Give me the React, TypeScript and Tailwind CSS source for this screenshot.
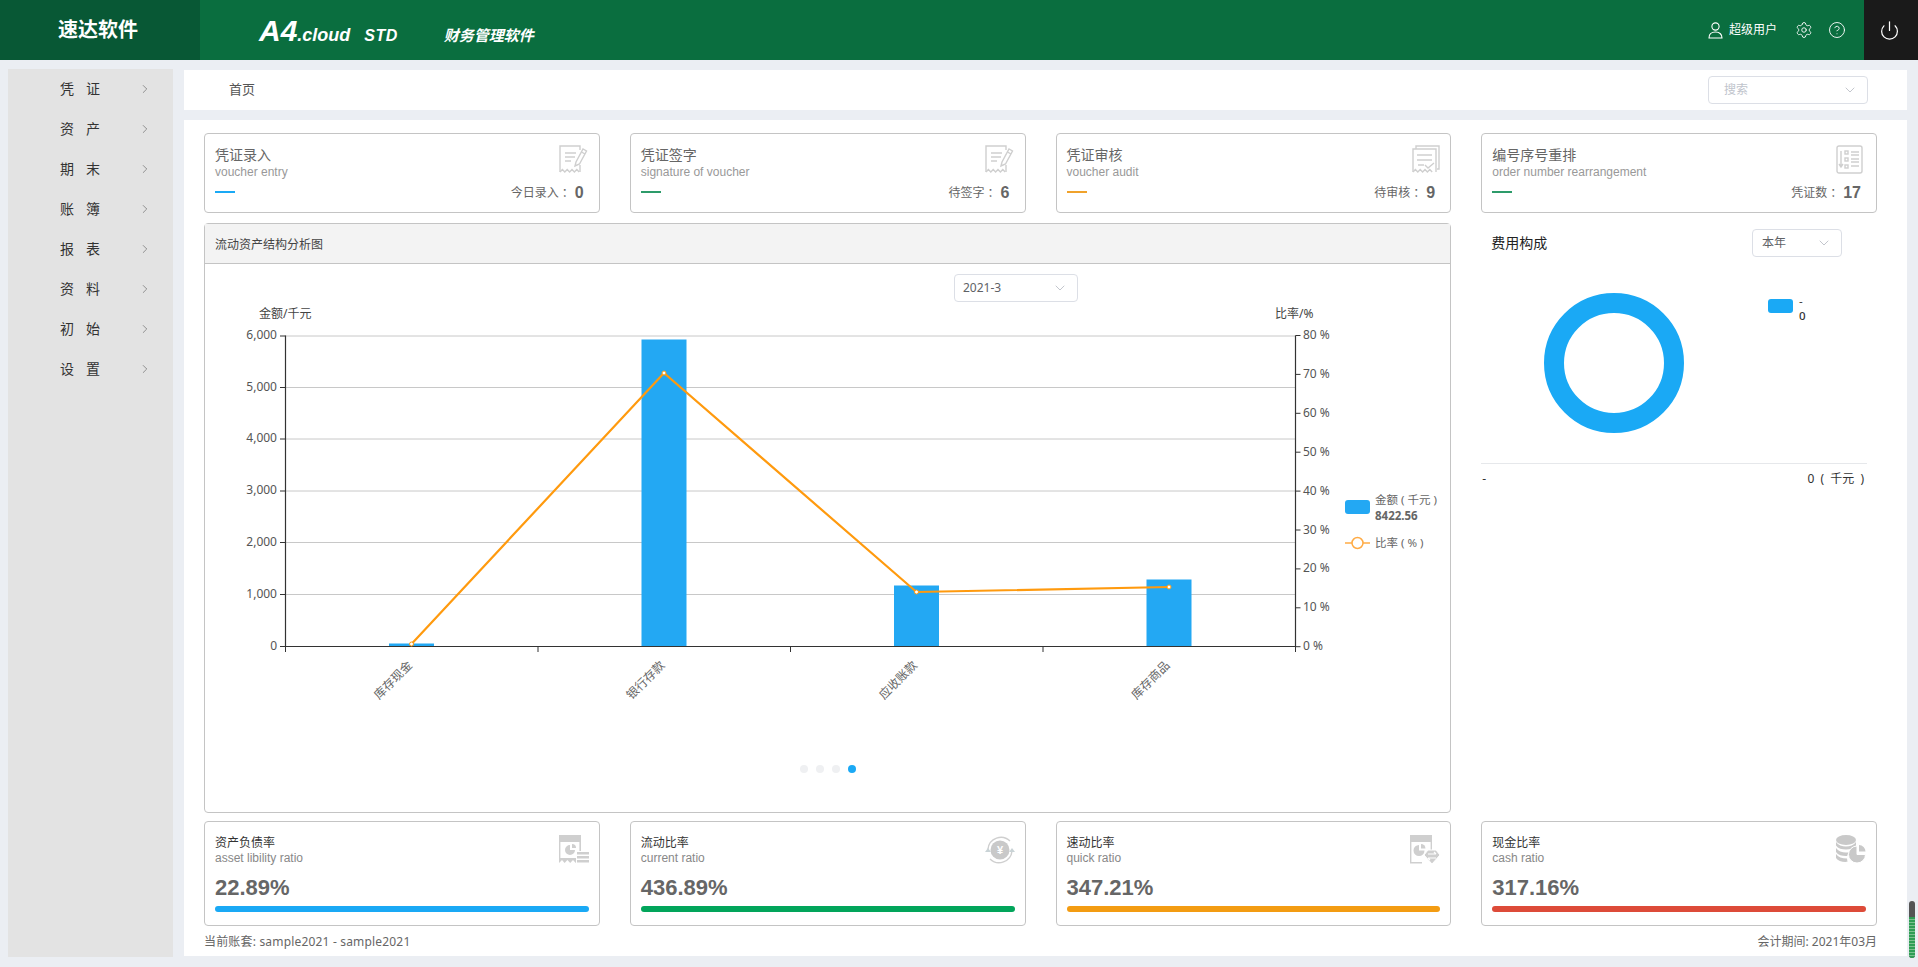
import { ChevronDown, ChevronRight, CircleHelp, Power, Settings } from "lucide-react"
import type { ReactNode } from "react"

const menu = ["凭 证", "资 产", "期 末", "账 簿", "报 表", "资 料", "初 始", "设 置"]

// icons are redrawn by eye from the screenshot
function Svg({ children }: { children: ReactNode }) {
  return (
    <svg width="30" height="29" viewBox="0 0 30 29" fill="none" stroke="#cfcfcf" strokeWidth="1.4">
      {children}
    </svg>
  )
}

const Zigzag = "l2.4 -2.4 2.4 2.4 2.4 -2.4 2.4 2.4 2.4 -2.4 2.4 2.4 2.4 -2.4 2.4 2.4"

function UserIcon() {
  return (
    <svg width="15" height="17" viewBox="0 0 15 17" fill="none" stroke="currentColor" strokeWidth="1.1">
      <circle cx="7.5" cy="4.5" r="3.6" />
      <path d="M1 16c0-4 2.800-6 6.500-6s6.500 2 6.500 6z" />
    </svg>
  )
}

function PenIcon() {
  return (
    <Svg>
      <path d="M1 27V1h20v4M21 20v7" />
      <path d={`M1 27${Zigzag}`} />
      <path d="M6 8h11M6 12h10M6 16h6" />
      <path d="M16 21l1-4 7-13 3.500 2-7 13z" />
      <path d="M22.500 7l3.500 2" />
    </Svg>
  )
}

function AuditIcon() {
  return (
    <Svg>
      <path d="M6 4V1h23v23h-2" />
      <path d="M3 27V4h23v23" />
      <path d={`M3 27${Zigzag}`} />
      <path d="M7 10h15M7 15h15M8 20h6" />
      <path d="M15 20l3 3 6-5" />
    </Svg>
  )
}

function OrderIcon() {
  return (
    <Svg>
      <rect x="1" y="1" width="25" height="27" rx="2" />
      <path d="M5 6v16M3 19l2 3 2-3" />
      <rect x="9" y="6" width="3" height="3" />
      <rect x="9" y="13" width="3" height="3" />
      <rect x="9" y="20" width="3" height="3" />
      <path d="M15 7h8M15 10h8M15 14h8M15 17h8M15 21h8" />
    </Svg>
  )
}

function LiabilityIcon() {
  return (
    <svg width="30" height="29" viewBox="0 0 30 29" fill="#cfcfcf">
      <path d="M0 0h22v28l-2.600-3-2.600 3-2.800-3-2.800 3-2.800-3-2.800 3-2.600-3L0 28z" />
      <rect x="1.400" y="7" width="19" height="16" fill="#fff" />
      <path d="M11 10a5 5 0 1 0 5 5h-5z" />
      <path d="M13 9a4 4 0 0 1 4 4h-4z" />
      <rect x="17" y="16" width="13" height="13" fill="#fff" />
      <path d="M18 17h12v2.500H18zM18 21h12v2.500H18zM18 25h12v2.500H18z" />
    </svg>
  )
}

function CurrentIcon() {
  return (
    <svg width="30" height="29" viewBox="0 0 30 29" fill="none" stroke="#cfcfcf" strokeWidth="1.4">
      <circle cx="15" cy="15" r="9.500" fill="#c9c9c9" stroke="none" />
      <text x="15" y="19" textAnchor="middle" fontSize="11" fontWeight="700" fill="#fff" stroke="none">¥</text>
      <path d="M3 14a13 13 0 0 1 22-8" />
      <path d="M27 16a13 13 0 0 1-22 8" />
      <path d="M0 14l3 -4 3 4z" fill="#c9d3d6" stroke="none" transform="translate(0 3)" />
      <path d="M24 14l3 -4 3 4z" fill="#c9d3d6" stroke="none" transform="translate(0 3)" />
    </svg>
  )
}

function QuickIcon() {
  return (
    <svg width="30" height="29" viewBox="0 0 30 29" fill="#cfcfcf">
      <path d="M0 0h22v16h-1.400V7H1.400v20H12v1.400H0z" />
      <path d="M9 10a5.500 5.500 0 1 0 5.500 5.500H9z" />
      <path d="M11 9a4.500 4.500 0 0 1 4.500 4.500H11z" />
      <path d="M14 20l4-5h8l4 5-8 9z" stroke="#fff" strokeWidth="1" />
      <path d="M18 19h8M26 19l-2-2M26 23h-8M18 23l2 2" stroke="#fff" strokeWidth="1.200" fill="none" />
    </svg>
  )
}

function CashIcon() {
  return (
    <svg width="30" height="29" viewBox="0 0 30 29" fill="#c9c9c9">
      <ellipse cx="10" cy="5" rx="10" ry="5" />
      <path d="M0 7c2 3 6 4.500 10 4.500S18 10 20 7v3.500c-2 3-6 4-10 4s-8-1-10-4zM0 13c2 3 6 4.500 10 4.500 1 0 2 0 3-.3-1 1-1.500 2.300-1.800 3.700L10 21c-4 0-8-1-10-4zM0 19c2 3 6 4.500 11 4.500l.500 3.300c-5 .5-9.500-.8-11.500-3.800z" />
      <path d="M21 11a8.500 8.500 0 1 0 8.500 8.500H21z" stroke="#fff" strokeWidth="1" />
      <path d="M23 10a6.500 6.500 0 0 1 6.500 6.500H23z" />
    </svg>
  )
}

const topCards = [
  { title: "凭证录入", sub: "voucher entry", label: "今日录入", value: "0", accent: "bg-[#1aa9f5]", icon: <PenIcon /> },
  { title: "凭证签字", sub: "signature of voucher", label: "待签字", value: "6", accent: "bg-[#2d9b6a]", icon: <PenIcon /> },
  { title: "凭证审核", sub: "voucher audit", label: "待审核", value: "9", accent: "bg-[#f0a22b]", icon: <AuditIcon /> },
  { title: "编号序号重排", sub: "order number rearrangement", label: "凭证数", value: "17", accent: "bg-[#2d9b6a]", icon: <OrderIcon /> },
]

const ratioCards = [
  { title: "资产负债率", sub: "asset libility ratio", value: "22.89%", bar: "bg-[#1aa9f5]", icon: <LiabilityIcon /> },
  { title: "流动比率", sub: "current ratio", value: "436.89%", bar: "bg-[#02a55b]", icon: <CurrentIcon /> },
  { title: "速动比率", sub: "quick ratio", value: "347.21%", bar: "bg-[#f39c12]", icon: <QuickIcon /> },
  { title: "现金比率", sub: "cash ratio", value: "317.16%", bar: "bg-[#dd4b39]", icon: <CashIcon /> },
]

const leftTicks = [
  { v: "6,000", y: 336 },
  { v: "5,000", y: 387.5 },
  { v: "4,000", y: 439 },
  { v: "3,000", y: 491 },
  { v: "2,000", y: 542.5 },
  { v: "1,000", y: 594.5 },
  { v: "0", y: 646.5 },
]
const rightTicks = ["80 %", "70 %", "60 %", "50 %", "40 %", "30 %", "20 %", "10 %", "0 %"]
const xTicks = [285.5, 538, 790.5, 1043, 1295.5]
const bars = [
  { name: "库存现金", x: 411.5, top: 643.5 },
  { name: "银行存款", x: 664, top: 339.5 },
  { name: "应收账款", x: 916.5, top: 585.5 },
  { name: "库存商品", x: 1169, top: 579.5 },
]
const linePts = [
  [411.5, 644],
  [664, 373],
  [916.5, 592],
  [1169, 587],
]

function Select({ label, placeholder, width, pad }: { label: string; placeholder?: boolean; width: string; pad: string }) {
  return (
    <div className={`${width} ${pad} flex h-7 items-center justify-between rounded border border-[#dcdfe6] bg-white pr-[9px] font-['Noto_Sans','Noto_Sans_CJK_SC',sans-serif] text-xs ${placeholder ? "text-[#c0c4cc]" : "text-[#606266]"}`}>
      <span>{label}</span>
      <ChevronDown size={16} strokeWidth={1.2} color="#b4b8c0" />
    </div>
  )
}

function Chart() {
  return (
    <svg viewBox="205 264 1245 548" className="block h-[548px] w-[1245px] font-['Noto_Sans','Noto_Sans_CJK_SC',sans-serif]">
      <text x="259" y="318" fontSize="12" fill="#444">金额/千元</text>
      <text x="1275" y="318" fontSize="12" fill="#444">比率/%</text>

      {leftTicks.map((t) => (
        <g key={t.v}>
          {t.v !== "0" && <line x1="285.5" x2="1295.5" y1={t.y} y2={t.y} stroke="#c8c8c8" />}
          <line x1="280" x2="285.5" y1={t.y} y2={t.y} stroke="#333" />
          <text x="277" y={t.y + 3} fontSize="12" fill="#555" textAnchor="end">{t.v}</text>
        </g>
      ))}
      {rightTicks.map((t, i) => {
        const y = 335.5 + i * 38.9
        return (
          <g key={t}>
            <line x1="1295.5" x2="1300.5" y1={y} y2={y} stroke="#333" />
            <text x="1303" y={y + 3.5} fontSize="12" fill="#555">{t}</text>
          </g>
        )
      })}

      {bars.map((b) => (
        <g key={b.name}>
          <rect x={b.x - 22.5} y={b.top} width="45" height={646.5 - b.top} fill="#23a8f3" />
          <text x={b.x + 1.5} y="666" fontSize="12" fill="#666" textAnchor="end" transform={`rotate(-45 ${b.x + 1.5} 666)`}>{b.name}</text>
        </g>
      ))}

      <line x1="285.5" x2="285.5" y1="335.5" y2="647" stroke="#333" strokeWidth="1.2" />
      <line x1="1295.5" x2="1295.5" y1="335.5" y2="647" stroke="#333" strokeWidth="1.2" />
      <line x1="285" x2="1296" y1="646.5" y2="646.5" stroke="#333" strokeWidth="1.2" />
      {xTicks.map((x) => (
        <line key={x} x1={x} x2={x} y1="646.5" y2="652" stroke="#333" />
      ))}

      <polyline points={linePts.map((p) => p.join(",")).join(" ")} fill="none" stroke="#ff9a0e" strokeWidth="2.2" />
      {linePts.map((p) => (
        <circle key={p[0]} cx={p[0]} cy={p[1]} r="2" fill="#fff" stroke="#ff9a0e" />
      ))}

      {/* legend */}
      <rect x="1345" y="500" width="25" height="14" rx="3" fill="#23a8f3" />
      <text x="1375" y="504" fontSize="11.5" fill="#666">金额 ( 千元 )</text>
      <text x="1375" y="520" fontSize="11.5" fontWeight="700" fill="#666">8422.56</text>
      <line x1="1345" x2="1370" y1="543" y2="543" stroke="#ffab45" strokeWidth="1.5" />
      <circle cx="1357.5" cy="543" r="5.5" fill="#fff" stroke="#ffab45" strokeWidth="1.5" />
      <text x="1375" y="547" fontSize="11.5" fill="#666">比率 ( % )</text>

      {/* pager dots */}
      {[804, 820, 836].map((x) => (
        <circle key={x} cx={x} cy="769" r="4" fill="#eff0f2" />
      ))}
      <circle cx="852" cy="769" r="4" fill="#1ba9f5" />
    </svg>
  )
}

function Donut() {
  return (
    <svg viewBox="1481 257 396 206" className="block h-[206px] w-[396px] font-['Noto_Sans','Noto_Sans_CJK_SC',sans-serif]">
      <circle cx="1614" cy="363" r="60" fill="none" stroke="#1aa9f5" strokeWidth="20" />
      <rect x="1768" y="299" width="25" height="14" rx="3" fill="#1aa9f5" />
      <text x="1799" y="305" fontSize="11.5" fill="#333">-</text>
      <text x="1799" y="320" fontSize="11.5" fontWeight="500" fill="#333">0</text>
    </svg>
  )
}

export default function App() {
  return (
    <div className="relative flex h-[967px] w-[1918px] flex-col overflow-hidden bg-[#ebeef3] font-['Liberation_Sans','Noto_Sans_CJK_SC',sans-serif]">
      <header className="flex h-[60px] shrink-0 items-center bg-[#0a6e3f] text-white">
        <div className="flex h-full w-[200px] items-center bg-[#085835] pl-[58px] text-[20px] font-bold">速达软件</div>
        <div className="ml-[59px] flex items-baseline pt-[1px] font-bold italic">
          <span className="text-[30px] leading-none">A4</span>
          <span className="text-[18px] leading-none">.cloud</span>
          <span className="ml-[14px] text-[16px] leading-none tracking-[0.5px]">STD</span>
          <span className="ml-[46px] text-[15px] leading-none">财务管理软件</span>
        </div>
        <div className="ml-auto flex items-center">
          <UserIcon />
          <span className="ml-[6px] text-xs">超级用户</span>
          <Settings size={18} strokeWidth={1.2} className="ml-[18px]" />
          <CircleHelp size={18} strokeWidth={1.2} className="ml-[15px]" />
          <div className="ml-[18px] flex h-[60px] w-[54px] items-center justify-center bg-[#1a1a1a] pr-[3px]">
            <Power size={21} strokeWidth={1.4} />
          </div>
        </div>
      </header>

      <div className="flex flex-1">
        <aside className="mt-[9px] ml-2 h-[888px] w-[165px] bg-[#e3e3e3]">
          {menu.map((m) => (
            <div key={m} className="flex h-10 items-center justify-between pr-[21px] pl-[52px] text-sm text-[#333]">
              <span className="[word-spacing:8px]">{m}</span>
              <ChevronRight size={14} strokeWidth={1} color="#555" />
            </div>
          ))}
        </aside>

        <main className="mt-[10px] ml-[11px] flex w-[1723px] flex-col gap-[10px]">
          <div className="flex h-10 items-center justify-between bg-white pr-[39px] pl-[45px]">
            <span className="text-[13px] text-[#555]">首页</span>
            <Select label="搜索" placeholder width="w-[160px]" pad="pl-[15px]" />
          </div>

          <div className="h-[836px] bg-white pt-[13px] pr-[30px] pl-5">
            <div className="grid grid-cols-4 gap-x-[30px]">
              {topCards.map((c) => (
                <div key={c.title} className="flex h-[80px] justify-between rounded border border-[#c4c4c4] pt-[11px] pr-[10px] pl-[10px]">
                  <div>
                    <div className="text-sm leading-5 text-[#666]">{c.title}</div>
                    <div className="text-xs leading-[14px] text-[#999]">{c.sub}</div>
                    <div className={`mt-[12px] h-0.5 w-5 ${c.accent}`}></div>
                  </div>
                  <div className="flex flex-col items-end">
                    {c.icon}
                    <div className="mt-[9px] flex items-center pr-[5px] text-xs leading-5 text-[#666]">
                      <span>{c.label}</span>
                      <span className="mr-1 font-['Noto_Sans_CJK_TC',sans-serif]">：</span>
                      <span className="text-[16px] font-bold text-[#666]">{c.value}</span>
                    </div>
                  </div>
                </div>
              ))}
            </div>

            <div className="mt-[10px] grid grid-cols-4 gap-x-[30px]">
              <section className="relative col-span-3 h-[590px] rounded border border-[#c4c4c4]">
                <div className="flex h-10 items-center border-b border-[#c4c4c4] bg-[#f3f3f3] pt-[2px] pl-[10px] text-xs text-[#444]">流动资产结构分析图</div>
                <div className="absolute top-[50px] left-[749px]">
                  <Select label="2021-3" width="w-[124px]" pad="pl-[8px]" />
                </div>
                <Chart />
              </section>

              <section>
                <div className="flex items-center justify-between pt-[6px] pr-[35px] pl-[10px]">
                  <span className="text-sm text-[#222]">费用构成</span>
                  <Select label="本年" width="w-[90px]" pad="pl-[9px]" />
                </div>
                <Donut />
                <div className="mr-[10px] flex items-center justify-between border-t border-[#e6e8eb] pt-[7px] pr-[3px] pl-[1px] font-['Noto_Sans','Noto_Sans_CJK_SC',sans-serif] text-xs text-[#333]">
                  <span>-</span>
                  <span className="[word-spacing:3px]">0 ( 千元 )</span>
                </div>
              </section>
            </div>

            <div className="mt-2 grid grid-cols-4 gap-x-[30px]">
              {ratioCards.map((c) => (
                <div key={c.title} className="h-[105px] rounded border border-[#c4c4c4] px-[10px] pt-[14px]">
                  <div className="flex justify-between">
                    <div>
                      <div className="text-xs leading-[15px] text-[#333]">{c.title}</div>
                      <div className="text-xs leading-[14px] text-[#888]">{c.sub}</div>
                    </div>
                    <div className="-mt-px h-[29px]">{c.icon}</div>
                  </div>
                  <div className="mt-[10px] text-[22px] leading-[26px] font-bold text-[#666]">{c.value}</div>
                  <div className={`mt-[5px] h-1.5 rounded-full ${c.bar}`}></div>
                </div>
              ))}
            </div>

            <div className="mt-[8px] flex justify-between font-['Noto_Sans','Noto_Sans_CJK_SC',sans-serif] text-xs leading-4 text-[#666]">
              <span className="tracking-[0.18px]">当前账套: sample2021 - sample2021</span>
              <span>会计期间: 2021年03月</span>
            </div>
          </div>
        </main>
      </div>

      {/* scroll thumb */}
      <div className="absolute top-[901px] left-[1909px] h-[57px] w-[6px] overflow-hidden rounded-full bg-[#555]">
        <div className="mt-4 h-[41px] bg-[repeating-linear-gradient(to_bottom,#2f9d55_0,#2f9d55_2px,#7cc08f_2px,#7cc08f_3px)]"></div>
      </div>
    </div>
  )
}
